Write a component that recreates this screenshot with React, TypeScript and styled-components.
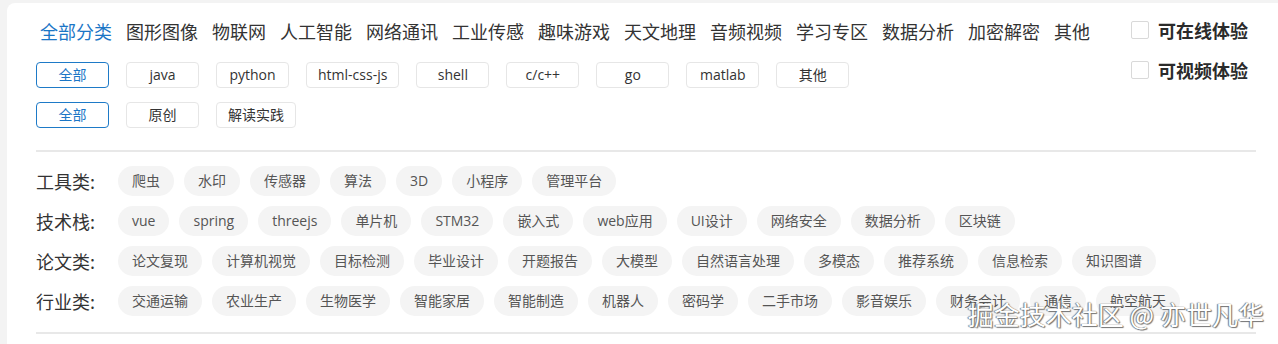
import styled, { createGlobalStyle } from "styled-components";

const GlobalStyle = createGlobalStyle`
  html, body {
    margin: 0;
    padding: 0;
    background: #f3f3f3;
    overflow: hidden;
  }
  body {
    font-family: "Noto Sans CJK SC", "Noto Sans", sans-serif;
    color: #333;
  }
`;

const latin = `"Open Sans", "Noto Sans CJK SC", sans-serif`;

const Card = styled.div`
  position: relative;
  margin: 3px 0 0 7px;
  padding: 16px 22px 0 29px;
  min-height: 360px;
  background: #fff;
  border-radius: 8px 0 0 0;
  box-sizing: border-box;
`;

const Top = styled.div`
  display: flex;
  align-items: flex-start;
`;

const LeftCol = styled.div`
  flex: 1;
`;

const Nav = styled.ul`
  display: flex;
  gap: 14px;
  margin: 0 0 19px 4px;
  padding: 0;
  list-style: none;
`;

const NavItem = styled.li<{ $active?: boolean }>`
  font-size: 18px;
  line-height: 24px;
  color: ${(p) => (p.$active ? "#1b76c6" : "#333")};
  white-space: nowrap;
`;

const BtnRow = styled.div`
  display: flex;
  gap: 17px;
  margin-bottom: 14px;
`;

const Btn = styled.button<{ $active?: boolean }>`
  height: 26px;
  min-width: 73px;
  padding: 0 11px;
  box-sizing: border-box;
  border: 1px solid ${(p) => (p.$active ? "#1e7ac7" : "#e6e6e6")};
  border-radius: 4px;
  background: #fff;
  font-family: ${latin};
  font-size: 14px;
  line-height: 24px;
  color: ${(p) => (p.$active ? "#1b76c6" : "#333")};
  white-space: nowrap;
`;

const RightCol = styled.div`
  width: 125px;
  margin-top: -1px;
  display: flex;
  flex-direction: column;
  gap: 16px;
`;

const Check = styled.label`
  display: flex;
  align-items: center;
  gap: 9px;
  height: 24px;
  font-size: 18px;
  font-weight: 700;
  color: #2b2b2b;
  white-space: nowrap;
`;

const Box = styled.span`
  width: 18px;
  height: 18px;
  box-sizing: border-box;
  border: 1px solid #d9d9d9;
  border-radius: 2px;
  background: #fff;
`;

const Divider = styled.div<{ $gap?: number }>`
  height: 2px;
  background: #e8e8e8;
  margin-top: ${(p) => p.$gap ?? 0}px;
`;

const Tags = styled.div`
  display: flex;
  flex-direction: column;
  gap: 10px;
  padding: 14px 0 16px;
`;

const TagRow = styled.div`
  display: flex;
  align-items: center;
`;

const Label = styled.span`
  width: 82px;
  flex-shrink: 0;
  font-size: 18px;
  line-height: 24px;
  color: #333;
`;

const Pills = styled.div`
  display: flex;
  gap: 10px;
`;

const Pill = styled.span`
  height: 30px;
  padding: 0 14px;
  border-radius: 15px;
  background: #f4f4f4;
  font-family: ${latin};
  font-size: 14px;
  line-height: 30px;
  color: #555;
  white-space: nowrap;
`;

const Watermark = styled.div`
  position: absolute;
  right: 14px;
  top: 294px;
  font-size: 26px;
  line-height: 34px;
  color: #fff;
  text-shadow: 0 0 1px #555, 1px 1px 1px #777, -1px 0 1px #888;
  white-space: nowrap;
`;

const navs = [
  "全部分类",
  "图形图像",
  "物联网",
  "人工智能",
  "网络通讯",
  "工业传感",
  "趣味游戏",
  "天文地理",
  "音频视频",
  "学习专区",
  "数据分析",
  "加密解密",
  "其他",
];

const langs = ["全部", "java", "python", "html-css-js", "shell", "c/c++", "go", "matlab", "其他"];
const kinds = ["全部", "原创", "解读实践"];

const tagGroups = [
  { label: "工具类:", tags: ["爬虫", "水印", "传感器", "算法", "3D", "小程序", "管理平台"] },
  {
    label: "技术栈:",
    tags: ["vue", "spring", "threejs", "单片机", "STM32", "嵌入式", "web应用", "UI设计", "网络安全", "数据分析", "区块链"],
  },
  {
    label: "论文类:",
    tags: ["论文复现", "计算机视觉", "目标检测", "毕业设计", "开题报告", "大模型", "自然语言处理", "多模态", "推荐系统", "信息检索", "知识图谱"],
  },
  {
    label: "行业类:",
    tags: ["交通运输", "农业生产", "生物医学", "智能家居", "智能制造", "机器人", "密码学", "二手市场", "影音娱乐", "财务会计", "通信", "航空航天"],
  },
];

export default function App() {
  return (
    <>
      <GlobalStyle />
      <Card>
        <Top>
          <LeftCol>
            <Nav>
              {navs.map((n, i) => (
                <NavItem key={n} $active={i === 0}>
                  {n}
                </NavItem>
              ))}
            </Nav>
            <BtnRow>
              {langs.map((l, i) => (
                <Btn key={l} $active={i === 0}>
                  {l}
                </Btn>
              ))}
            </BtnRow>
            <BtnRow>
              {kinds.map((k, i) => (
                <Btn key={k} $active={i === 0}>
                  {k}
                </Btn>
              ))}
            </BtnRow>
          </LeftCol>
          <RightCol>
            <Check>
              <Box />
              可在线体验
            </Check>
            <Check>
              <Box />
              可视频体验
            </Check>
          </RightCol>
        </Top>
        <Divider $gap={8} />
        <Tags>
          {tagGroups.map((g) => (
            <TagRow key={g.label}>
              <Label>{g.label}</Label>
              <Pills>
                {g.tags.map((t) => (
                  <Pill key={t}>{t}</Pill>
                ))}
              </Pills>
            </TagRow>
          ))}
        </Tags>
        <Divider />
        <Watermark>掘金技术社区 @ 亦世凡华</Watermark>
      </Card>
    </>
  );
}
